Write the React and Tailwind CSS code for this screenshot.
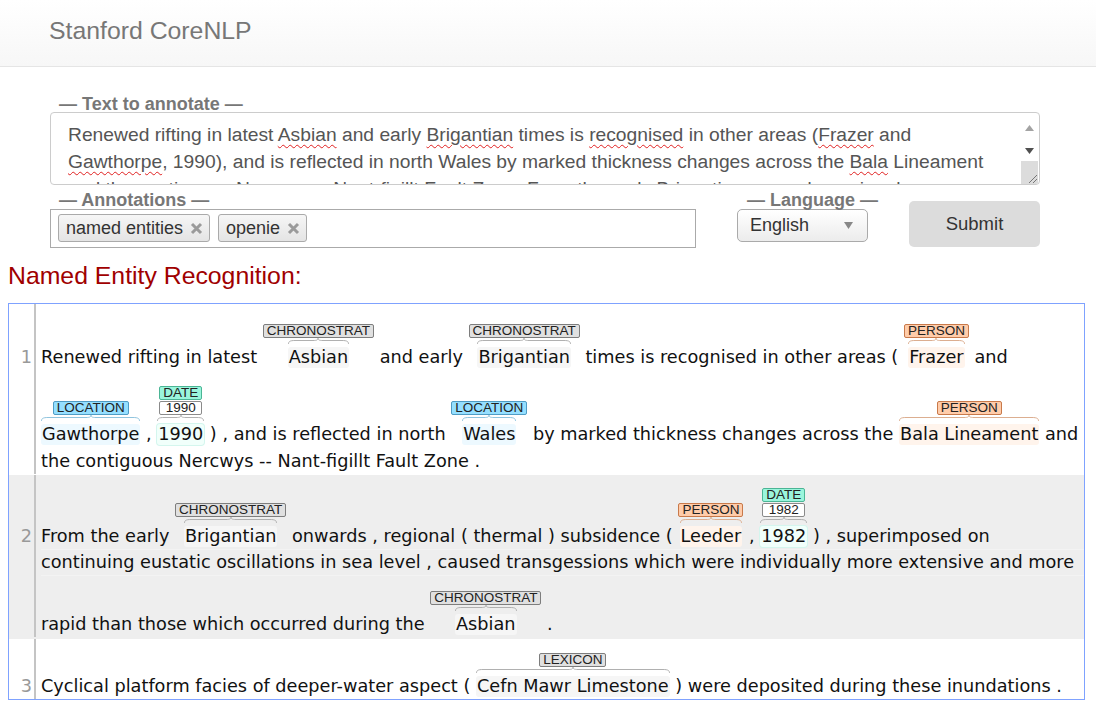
import React from "react";

const T = {
  CH: {
    label: "bg-[#e0e0e0] border-[#7d7d7d]",
    hl: "bg-[#f6f6f6]",
    braceDiv: "border-[#b0b0b0]",
    braceSvg: "stroke-[#b0b0b0]",
  },
  PER: {
    label: "bg-[#ffccaa] border-[#c8794a]",
    hl: "bg-[#fff4ec]",
    braceDiv: "border-[#dcae90]",
    braceSvg: "stroke-[#dcae90]",
  },
  LOC: {
    label: "bg-[#95dfff] border-[#4f9cc4]",
    hl: "bg-[#edf9ff]",
    braceDiv: "border-[#90c4de]",
    braceSvg: "stroke-[#90c4de]",
  },
  DATE: {
    label: "bg-[#9af5dc] border-[#4bb595]",
    hl: "bg-[#f1fffb] ring-1 ring-[#d4f6ee]",
    braceDiv: "border-[#b0b0b0]",
    braceSvg: "stroke-[#b0b0b0]",
  },
  NORM: { label: "bg-white border-[#8a8a8a]" },
};

function Brace({ d, s }) {
  return (
    <div className="flex h-[6px] w-full">
      <svg width="7" height="6" viewBox="0 0 7 6" className={`shrink-0 fill-none ${s}`}>
        <path d="M0.5 6 C0.5 3.6 1.8 2.5 7 2.5" strokeWidth="1" />
      </svg>
      <div className={`flex-1 h-[3px] border-b ${d}`} />
      <svg width="10" height="6" viewBox="0 0 10 6" className={`shrink-0 fill-none ${s}`}>
        <path d="M0 2.5 C3.8 2.5 5 2 5 0 C5 2 6.2 2.5 10 2.5" strokeWidth="1" />
      </svg>
      <div className={`flex-1 h-[3px] border-b ${d}`} />
      <svg width="7" height="6" viewBox="0 0 7 6" className={`shrink-0 fill-none ${s}`}>
        <path d="M0 2.5 C5.2 2.5 6.5 3.6 6.5 6" strokeWidth="1" />
      </svg>
    </div>
  );
}

function Label({ name, cls }) {
  return (
    <span
      className={`h-[14px] px-[3px] border rounded-[2px] text-center font-['Liberation_Sans',Arial,sans-serif] text-[13.5px] leading-[12px] text-[#222] ${cls}`}
    >
      {name}
    </span>
  );
}

function Ent({ text, type, labels }) {
  const t = T[type];
  return (
    <span className="inline-flex flex-col items-center">
      <span className="flex flex-col items-stretch gap-[1px]">
        {labels.map((l, i) => (
          <Label key={i} name={l.name} cls={l.cls} />
        ))}
      </span>
      <span className="flex flex-col">
        <Brace d={t.braceDiv} s={t.braceSvg} />
        <span className="h-[26px] flex items-center">
          <span className={`rounded-[3px] px-[1px] leading-[21px] ${t.hl}`}>{text}</span>
        </span>
      </span>
    </span>
  );
}

const ch = (text) => <Ent text={text} type="CH" labels={[{ name: "CHRONOSTRAT", cls: T.CH.label }]} />;
const lex = (text) => <Ent text={text} type="CH" labels={[{ name: "LEXICON", cls: T.CH.label }]} />;
const per = (text) => <Ent text={text} type="PER" labels={[{ name: "PERSON", cls: T.PER.label }]} />;
const loc = (text) => <Ent text={text} type="LOC" labels={[{ name: "LOCATION", cls: T.LOC.label }]} />;
const date = (text) => (
  <Ent
    text={text}
    type="DATE"
    labels={[
      { name: "DATE", cls: T.DATE.label },
      { name: text, cls: T.NORM.label },
    ]}
  />
);

function Txt({ children }) {
  return <span className="h-[26px] leading-[26px]">{children}</span>;
}

function Row({ h, items, sep }) {
  return (
    <div className={`flex items-end whitespace-pre ${h} ${sep ? "border-t border-[#f3f3f3]" : ""}`}>
      {items.map((it, i) =>
        typeof it === "string" ? <Txt key={i}>{it}</Txt> : <React.Fragment key={i}>{it}</React.Fragment>
      )}
    </div>
  );
}

function Sentence({ n, bg, firstH, rows, pb }) {
  return (
    <div className={`flex ${bg} ${pb}`}>
      <div className="w-[27px] shrink-0 border-r-2 border-[#c4c4c4] flex flex-col">
        <div className={`flex items-end justify-end pr-[2px] ${firstH}`}>
          <span className="h-[26px] leading-[26px] text-[#999]">{n}</span>
        </div>
      </div>
      <div className="flex-1 pl-[5px] flex flex-col">
        {rows.map((r, i) => (
          <Row key={i} h={r.h} items={r.items} sep={r.sep} />
        ))}
      </div>
    </div>
  );
}

function Wavy({ children }) {
  return (
    <span className="underline decoration-wavy decoration-[#e02020] decoration-1 underline-offset-[3px]">
      {children}
    </span>
  );
}

function XIcon() {
  return (
    <svg width="13" height="13" viewBox="0 0 13 13" className="ml-[7px]">
      <path d="M2 2 L11 11 M11 2 L2 11" stroke="#9a9a9a" strokeWidth="3" />
    </svg>
  );
}

function Chip({ children }) {
  return (
    <div className="h-[28px] flex items-center pl-[7px] pr-[6px] border border-[#aaa] rounded-[3px] bg-linear-to-b from-[#f6f6f6] to-[#e4e4e4] text-[18px] text-[#333]">
      <span>{children}</span>
      <XIcon />
    </div>
  );
}

export default function App() {
  return (
    <div className="w-[1096px] h-[710px] overflow-hidden bg-white font-['Liberation_Sans',Arial,sans-serif]">
      {/* Header */}
      <div className="h-[67px] border-b border-[#e5e5e5] bg-linear-to-b from-white to-[#f7f7f7] pl-[49px]">
        <span className="block leading-[62px] text-[24.8px] text-[#777]">Stanford CoreNLP</span>
      </div>

      {/* Form */}
      <div className="ml-[50px] w-[990px]">
        <div className="mt-[26px] ml-[9px] h-[19px] leading-[22px] text-[18px] font-bold text-[#777]">
          — Text to annotate —
        </div>
        <div className="h-[73px] border border-[#ccc] rounded-[4px] flex overflow-hidden">
          <div className="flex-1 overflow-hidden pl-[17px] pt-[8px] text-[19.25px] leading-[27px] text-[#555] whitespace-nowrap">
            <div>
              Renewed rifting in latest <Wavy>Asbian</Wavy> and early <Wavy>Brigantian</Wavy> times is{" "}
              <Wavy>recognised</Wavy> in other areas (<Wavy>Frazer</Wavy> and
            </div>
            <div>
              <Wavy>Gawthorpe</Wavy>, 1990), and is reflected in north Wales by marked thickness changes across
              the <Wavy>Bala</Wavy> Lineament
            </div>
            <div className="h-[9px] overflow-hidden">
              and the contiguous Nercwys -- Nant-figillt Fault Zone. From the early Brigantian onwards, regional
            </div>
          </div>
          <div className="w-[17px] mr-[1px] flex flex-col">
            <div className="h-[27px] flex items-center justify-center pt-[2px]">
              <svg width="9" height="6" viewBox="0 0 9 6">
                <path d="M0 6 L4.5 0 L9 6 Z" fill="#a3a3a3" />
              </svg>
            </div>
            <div className="h-[21px] flex items-center justify-center">
              <svg width="9" height="6" viewBox="0 0 9 6">
                <path d="M0 0 L9 0 L4.5 6 Z" fill="#505050" />
              </svg>
            </div>
            <div className="flex-1 bg-[#dcdcdc] flex items-end justify-end">
              <svg width="12" height="12" viewBox="0 0 12 12">
                <path d="M11 3 L3 11 M11 7 L7 11" stroke="#777" strokeWidth="1" />
              </svg>
            </div>
          </div>
        </div>

        <div className="mt-[5px] flex items-start">
          <div className="w-[646px]">
            <div className="ml-[9px] h-[19px] leading-[20px] text-[18px] font-bold text-[#777]">— Annotations —</div>
            <div className="h-[39px] border border-[#aaa] flex items-start gap-[8px] pl-[7px] pt-[4px]">
              <Chip>named entities</Chip>
              <Chip>openie</Chip>
            </div>
          </div>
          <div className="ml-[41px] w-[141px]">
            <div className="ml-[10px] h-[19px] leading-[20px] text-[18px] font-bold text-[#777] whitespace-nowrap">
              — Language —
            </div>
            <div className="w-[131px] h-[33px] border border-[#aaa] rounded-[5px] bg-linear-to-b from-white to-[#ececec] flex items-center pl-[12px] pr-[14px] justify-between text-[18px] text-[#333]">
              <span>English</span>
              <svg width="9" height="7" viewBox="0 0 9 7">
                <path d="M0 0 L9 0 L4.5 7 Z" fill="#888" />
              </svg>
            </div>
          </div>
          <div className="ml-[31px] mt-[11px] w-[131px] h-[46px] rounded-[5px] bg-[#dcdcdc] flex items-center justify-center text-[18.5px] text-[#333]">
            Submit
          </div>
        </div>
      </div>

      {/* NER */}
      <div className="mt-[13px] ml-[8px] h-[30px] leading-[30px] text-[24.8px] text-[#a00000]">
        Named Entity Recognition:
      </div>
      <div className="mt-[12px] ml-[8px] w-[1077px] border border-[#7fa2ff] overflow-hidden font-['DejaVu_Sans',Verdana,sans-serif] text-[17.7px] text-[#111]">
        <Sentence
          n="1"
          bg="bg-white"
          firstH="h-[66px]"
          pb="pb-[1px]"
          rows={[
            {
              h: "h-[66px]",
              items: [
                "Renewed rifting in latest ",
                ch("Asbian"),
                " and early ",
                ch("Brigantian"),
                " times is recognised in other areas ( ",
                per("Frazer"),
                " and",
              ],
            },
            {
              h: "h-[77px]",
              items: [
                loc("Gawthorpe"),
                " , ",
                date("1990"),
                " ) , and is reflected in north ",
                loc("Wales"),
                " by marked thickness changes across the ",
                per("Bala Lineament"),
                " and",
              ],
            },
            { h: "h-[27px]", items: ["the contiguous Nercwys -- Nant-figillt Fault Zone ."] },
          ]}
        />
        <Sentence
          n="2"
          bg="bg-[#eeeeee]"
          firstH="h-[74px]"
          pb="pb-[2px]"
          rows={[
            {
              h: "h-[74px]",
              items: [
                "From the early ",
                ch("Brigantian"),
                " onwards , regional ( thermal ) subsidence ( ",
                per("Leeder"),
                " , ",
                date("1982"),
                " ) , superimposed on",
              ],
            },
            {
              h: "h-[26px]",
              sep: true,
              items: [
                "continuing eustatic oscillations in sea level , caused transgessions which were individually more extensive and more",
              ],
            },
            {
              h: "h-[62px]",
              sep: true,
              items: ["rapid than those which occurred during the ", ch("Asbian"), " ."],
            },
          ]}
        />
        <Sentence
          n="3"
          bg="bg-white"
          firstH="h-[60px]"
          pb=""
          rows={[
            {
              h: "h-[60px]",
              items: [
                "Cyclical platform facies of deeper-water aspect ( ",
                lex("Cefn Mawr Limestone"),
                " ) were deposited during these inundations .",
              ],
            },
          ]}
        />
      </div>
    </div>
  );
}
